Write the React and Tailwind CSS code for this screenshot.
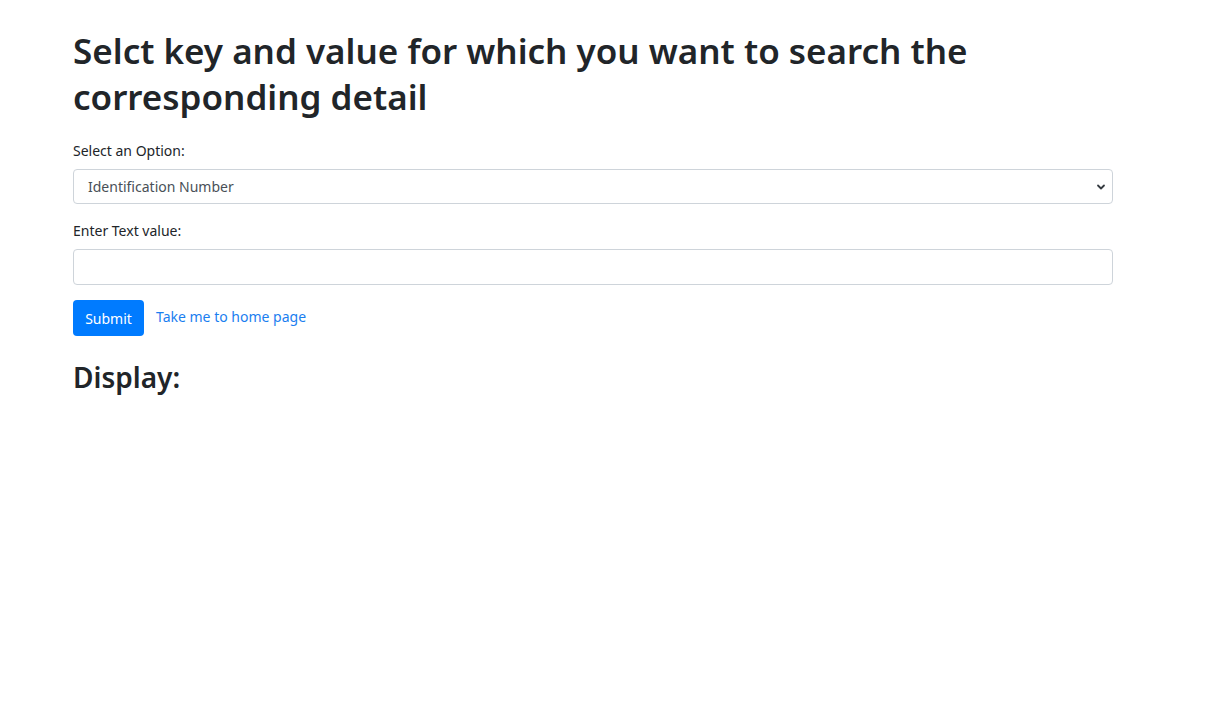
import React from "react";

export default function App() {
  return (
    <div className="min-h-[717px] bg-white text-[#212529]" style={{ fontFamily: '"Noto Sans", "Open Sans", sans-serif' }}>
      <div className="w-[1040px] ml-[73px] pt-[28px]">
        <h1 className="text-[35px] leading-[46px] font-semibold text-[#212529] mb-[21px]">
          Selct key and value for which you want to search the corresponding detail
        </h1>
        <div className="text-[14px] leading-[20px] mb-[8px]">Select an Option:</div>
        <div className="relative h-[35px] border border-[#ced4da] rounded-[4px] flex items-center pl-[14px] text-[14px] text-[#495057] mb-[17px]">
          <span>Identification Number</span>
          <svg className="absolute right-[6px] top-[12px]" width="10" height="10" viewBox="0 0 10 10">
            <path d="M2 3.5 L5 6.5 L8 3.5" fill="none" stroke="#343a40" strokeWidth="1.8" strokeLinecap="round" strokeLinejoin="round" />
          </svg>
        </div>
        <div className="text-[14px] leading-[20px] mb-[8px]">Enter Text value:</div>
        <div className="h-[36px] border border-[#ced4da] rounded-[4px] mb-[15px]"></div>
        <div className="flex items-center gap-[12px]">
          <button className="h-[36px] w-[71px] bg-[#007bff] text-white text-[14px] rounded-[4px]">Submit</button>
          <a className="text-[14px] text-[#1a7ef0] -mt-[4px]">Take me to home page</a>
        </div>
        <h3 className="text-[28px] leading-[36px] font-semibold mt-[23px]">Display:</h3>
      </div>
    </div>
  );
}
